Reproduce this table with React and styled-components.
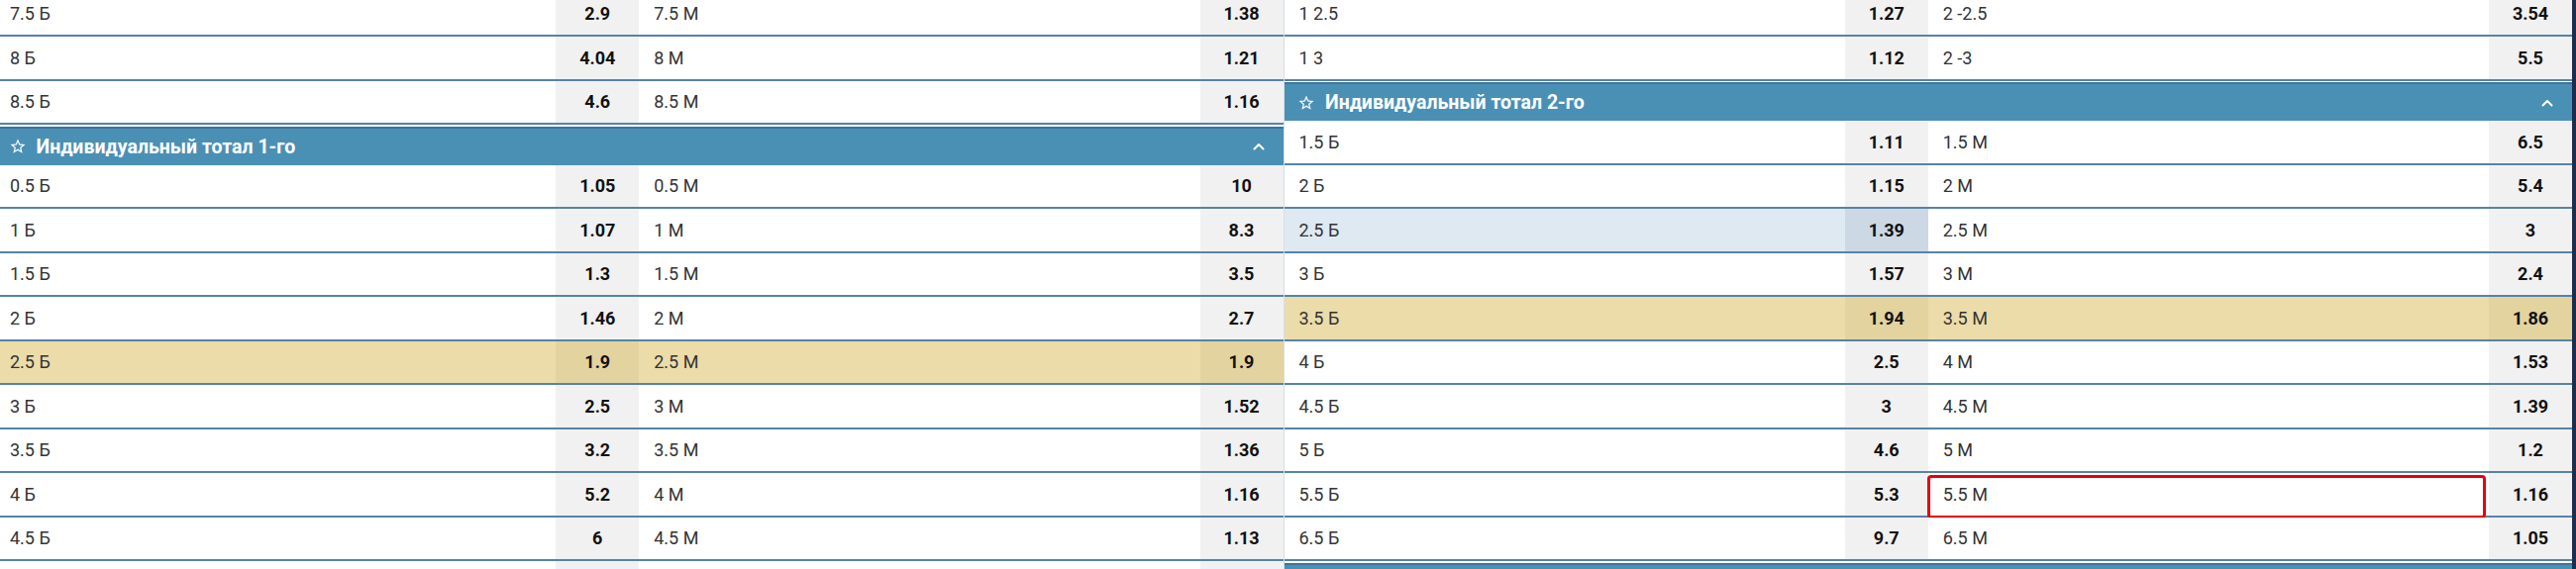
import styled, { createGlobalStyle } from "styled-components";

const GlobalStyle = createGlobalStyle`
  html, body {
    margin: 0;
    padding: 0;
    background: #ffffff;
    overflow: hidden;
  }
  body {
    font-family: Roboto, "Liberation Sans", sans-serif;
  }
`;

const leftTop = [
  ["7.5 Б", "2.9", "7.5 М", "1.38"],
  ["8 Б", "4.04", "8 М", "1.21"],
  ["8.5 Б", "4.6", "8.5 М", "1.16"],
];

const leftRows = [
  ["0.5 Б", "1.05", "0.5 М", "10"],
  ["1 Б", "1.07", "1 М", "8.3"],
  ["1.5 Б", "1.3", "1.5 М", "3.5"],
  ["2 Б", "1.46", "2 М", "2.7"],
  ["2.5 Б", "1.9", "2.5 М", "1.9", "gold", "gold"],
  ["3 Б", "2.5", "3 М", "1.52"],
  ["3.5 Б", "3.2", "3.5 М", "1.36"],
  ["4 Б", "5.2", "4 М", "1.16"],
  ["4.5 Б", "6", "4.5 М", "1.13"],
  ["", "", "", ""],
];

const rightTop = [
  ["1 2.5", "1.27", "2 -2.5", "3.54"],
  ["1 3", "1.12", "2 -3", "5.5"],
];

const rightRows = [
  ["1.5 Б", "1.11", "1.5 М", "6.5"],
  ["2 Б", "1.15", "2 М", "5.4"],
  ["2.5 Б", "1.39", "2.5 М", "3", "hover"],
  ["3 Б", "1.57", "3 М", "2.4"],
  ["3.5 Б", "1.94", "3.5 М", "1.86", "gold", "gold"],
  ["4 Б", "2.5", "4 М", "1.53"],
  ["4.5 Б", "3", "4.5 М", "1.39"],
  ["5 Б", "4.6", "5 М", "1.2"],
  ["5.5 Б", "5.3", "5.5 М", "1.16", "plain", "marked"],
  ["6.5 Б", "9.7", "6.5 М", "1.05"],
];

const labelBg = { plain: "#ffffff", gold: "#ecdca9", hover: "#dfe9f2", marked: "#ffffff" };
const oddBg = { plain: "#f1f1f1", gold: "#e3d39f", hover: "#ccd9e4", marked: "#f1f1f1" };

const StarIcon = () => (
  <svg width="18" height="18" viewBox="0 0 24 24" fill="#ffffff">
    <path d="M22 9.24l-7.19-.62L12 2 9.19 8.63 2 9.24l5.46 4.73L5.82 21 12 17.27 18.18 21l-1.63-7.03L22 9.24zM12 15.4l-3.76 2.27 1-4.28-3.32-2.88 4.38-.38L12 6.1l1.71 4.04 4.38.38-3.32 2.88 1 4.28L12 15.4z" />
  </svg>
);

const Chevron = () => (
  <svg width="12" height="8" viewBox="0 0 12 8" fill="none">
    <path d="M1.5 6.5L6 2l4.5 4.5" stroke="#ffffff" strokeWidth="2" strokeLinecap="round" strokeLinejoin="round" />
  </svg>
);

const Half = ({ label, odd, tone = "plain" }) => (
  <Pair>
    <Label $tone={tone}>
      {label}
      {tone === "marked" && <Marker />}
    </Label>
    <Odd $tone={tone}>{odd}</Odd>
  </Pair>
);

const MarketRow = ({ row }) => {
  const [l1, o1, l2, o2, t1 = "plain", t2 = "plain"] = row;
  return (
    <Row>
      <Half label={l1} odd={o1} tone={t1} />
      <Half label={l2} odd={o2} tone={t2} />
    </Row>
  );
};

const SectionHeader = ({ title }) => (
  <Header>
    <StarIcon />
    <Title>{title}</Title>
    <Chevron />
  </Header>
);

export default function App() {
  return (
    <>
      <GlobalStyle />
      <Board>
        <Panel>
          {leftTop.map((r, i) => (
            <MarketRow key={i} row={r} />
          ))}
          <SectionHeader title="Индивидуальный тотал 1-го" />
          {leftRows.map((r, i) => (
            <MarketRow key={i} row={r} />
          ))}
        </Panel>
        <Divider />
        <Panel>
          {rightTop.map((r, i) => (
            <MarketRow key={i} row={r} />
          ))}
          <SectionHeader title="Индивидуальный тотал 2-го" />
          {rightRows.map((r, i) => (
            <MarketRow key={i} row={r} />
          ))}
          <SectionHeader title="" />
        </Panel>
        <Edge />
      </Board>
    </>
  );
}

const Board = styled.div`
  display: flex;
  align-items: stretch;
  margin: -7.5px 0 0 -5px;
  width: calc(100% + 5px);
  min-height: calc(100vh + 8px);
`;

const Panel = styled.div`
  flex: 1 1 0;
  min-width: 0;
  display: flex;
  flex-direction: column;
`;

const Divider = styled.div`
  flex: none;
  width: 1px;
  background: #d3e0ea;
`;

const Edge = styled.div`
  flex: none;
  width: 4px;
  background: #1c2e4d;
`;

const Row = styled.div`
  display: grid;
  grid-template-columns: 1fr 1fr;
  height: 44.5px;
  box-sizing: border-box;
  border-bottom: 2px solid #5683a8;
  flex: none;
`;

const Pair = styled.div`
  display: flex;
  min-width: 0;
`;

const Label = styled.div`
  position: relative;
  flex: 1;
  display: flex;
  align-items: center;
  padding-left: 15px;
  font-size: 18px;
  color: #333333;
  background: ${(p) => labelBg[p.$tone]};
`;

const Odd = styled.div`
  flex: none;
  width: 84px;
  display: flex;
  align-items: center;
  justify-content: center;
  font-size: 18px;
  font-weight: 700;
  color: #111111;
  background: ${(p) => oddBg[p.$tone]};
`;

const Marker = styled.span`
  position: absolute;
  top: 1.5px;
  bottom: -3px;
  left: -1px;
  right: 3px;
  border: 3.5px solid #e8000c;
  border-radius: 4px;
  box-sizing: border-box;
  pointer-events: none;
`;

const Header = styled.div`
  flex: none;
  display: flex;
  align-items: center;
  height: 39px;
  box-sizing: border-box;
  margin-top: 1.5px;
  border-top: 2px solid #3f7399;
  padding: 0 19px 0 13.5px;
  background: #4a90b5;
  color: #ffffff;
`;

const Title = styled.span`
  flex: 1;
  margin-left: 10px;
  font-size: 19.5px;
  font-weight: 700;
  white-space: nowrap;
`;
